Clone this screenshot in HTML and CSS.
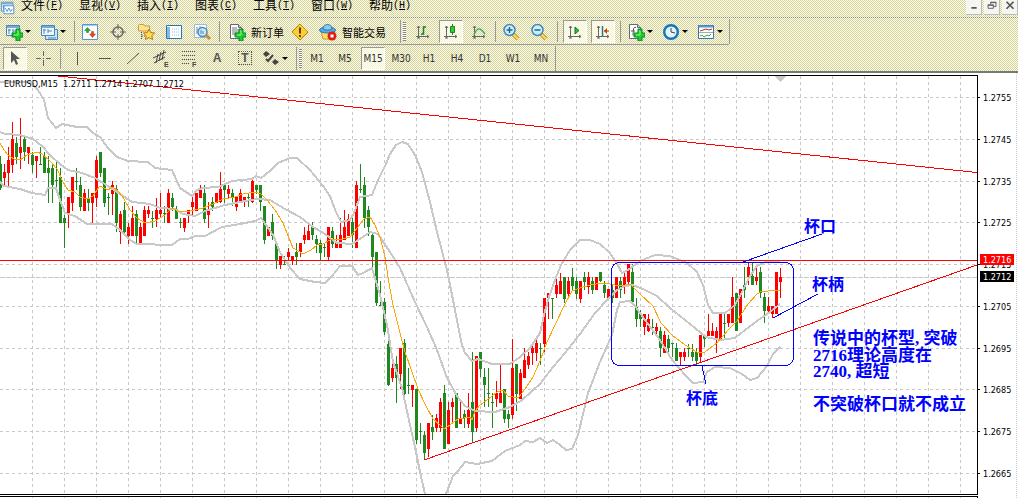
FILE: index.html
```
<!DOCTYPE html>
<html lang="zh-CN">
<head>
<meta charset="utf-8">
<title>EURUSD,M15</title>
<link rel="stylesheet" href="styles.css">
</head>
<body>
<svg class="defs" aria-hidden="true">
  <defs>
    <symbol id="axes" viewBox="0 0 18 18"><path d="M4.500 3v12M2 13.500h13M3 5l1.500-2L6 5M13 12l2 1.500-2 1.500M3 15h3" fill="none" stroke="#666"/></symbol>
    <symbol id="plus" viewBox="0 0 18 18"><path d="M11 6h4v4h3v4h-3v4h-4v-4H7v-4h4z" fill="#2c2" stroke="#083"/><path d="M12 8h1v4H9" fill="none" stroke="#8f8"/></symbol>
    <symbol id="sheet" viewBox="0 0 18 18"><path d="M2.500 1.500h8l3 3v11h-11z" fill="#fff" stroke="#667"/><path d="M10.500 1.500v3h3" fill="#ccd" stroke="#667"/></symbol>
    <symbol id="win" viewBox="0 0 18 18"><path d="M1.500 2.500h13v10h-13z" fill="#eef6ff" stroke="#48b"/><path d="M2 4h12" stroke="#7ad" stroke-width="2"/><path d="M4 6v5M3 7h3M8 10V6m0 2h4" stroke="#58a" fill="none"/></symbol>
  </defs>
</svg>
<header class="top">
  <nav class="menubar">
    <svg class="app" viewBox="0 0 18 18"><use href="#win"/><path d="M4.500 6.500h11v9h-11z" fill="#fff" stroke="#48c"/><path d="M6 9l2 4 2-4 2 4 2-3" fill="none" stroke="#48c"/></svg>
    <div class="menus">
      <button>文件<span>(<u>F</u>)</span></button>
      <button>显视<span>(<u>V</u>)</span></button>
      <button>插入<span>(<u>I</u>)</span></button>
      <button>图表<span>(<u>C</u>)</span></button>
      <button>工具<span>(<u>T</u>)</span></button>
      <button>窗口<span>(<u>W</u>)</span></button>
      <button>帮助<span>(<u>H</u>)</span></button>
    </div>
    <div class="winbtns">
      <button aria-label="最小化"><svg viewBox="0 0 16 16"><path d="M5 9h6" stroke="#555" stroke-width="2"/></svg></button>
      <button aria-label="还原"><svg viewBox="0 0 16 16"><path d="M6.500 5V2.500h6v5H10M6 3h7M3.500 5.500h6v4h-6zM3 6h7" fill="none" stroke="#555"/></svg></button>
      <button aria-label="关闭"><svg viewBox="0 0 16 16"><path d="M4 2l8 8M12 2l-8 8" stroke="#555" stroke-width="2"/></svg></button>
    </div>
  </nav>

  <div class="toolbar bordered">
    <button class="tool drop" aria-label="新图表"><svg viewBox="0 0 18 18"><use href="#win"/><use href="#plus"/></svg></button>
    <button class="tool drop" aria-label="配置文件"><svg viewBox="0 0 18 18"><path d="M5.500 6.500h12v10h-12z" fill="#cde6fa" stroke="#48b"/><use href="#win"/><path d="M8 15h8" stroke="#48b"/></svg></button>
    <i class="sep s4"></i>
    <button class="tool" aria-label="市场报价"><svg viewBox="0 0 18 18"><path d="M1.500 1.500h15v15h-15z" fill="#fff" stroke="#59c"/><path d="M2 2.500h14" stroke="#9cf"/><path d="M3.500 7.500l3-3 3 3h-2v2h-2v-2z" fill="#2a3" stroke="#173" stroke-width=".5"/><path d="M8.500 11l3 3.500 3-3.500h-2V8.500h-2V11z" fill="#e42" stroke="#931" stroke-width=".5"/></svg></button>
    <button class="tool" aria-label="数据窗口"><svg viewBox="0 0 18 18"><circle cx="9" cy="9" r="5" fill="none" stroke="#666" stroke-width="1.500"/><path d="M9 1v6M9 11v6M1 9h6M11 9h6" stroke="#666"/></svg></button>
    <button class="tool" aria-label="导航"><svg viewBox="0 0 18 18"><path d="M1.500 8V2.500l1-1h4l1 1.500h5V8z" fill="#ffe48a" stroke="#c94"/><path d="M4.500 9v7M5 13h4" stroke="#555" stroke-dasharray="1 1"/><path d="M12 6l1.600 3.500 4 .5-2.800 2.700.8 3.800-3.600-1.900-3.600 1.900.8-3.800L6.400 10l4-.5z" fill="#fd5" stroke="#b71"/></svg></button>
    <button class="tool" aria-label="终端"><svg viewBox="0 0 18 18"><path d="M1.500 2.500h15v13h-15z" fill="#fff" stroke="#27b"/><path d="M2 4h3v11H2z" fill="#8bd"/><path d="M7 6h8M7 9h8M7 12h8" stroke="#9be" stroke-dasharray="1 1"/></svg></button>
    <button class="tool" aria-label="策略测试"><svg viewBox="0 0 18 18"><path d="M1.500 1.500h12v13h-12z" fill="#f8fbff" stroke="#9bd"/><path d="M4 4v7M7 3v4" stroke="#68a"/><circle cx="9.500" cy="9" r="4.500" fill="#cceaff" stroke="#58a" stroke-width="1.500"/><path d="M8 7v4M10 8v3" stroke="#48a"/><path d="M13 12l4 4" stroke="#c83" stroke-width="3"/></svg></button>
    <i class="sep s7"></i>
    <button class="tool wide order"><svg viewBox="0 0 18 18"><use href="#sheet"/><path d="M4 5h5M4 7h7M4 9h7M4 11h4" stroke="#777"/><use href="#plus"/></svg>新订单</button>
    <button class="tool" aria-label="警告"><svg viewBox="0 0 18 18"><path d="M9 1l8 8-8 8-8-8z" fill="#fc3" stroke="#b80" stroke-linejoin="round"/><path d="M9 4.500v6M9 12v2" stroke="#542" stroke-width="2"/></svg></button>
    <button class="tool wide expert"><svg viewBox="0 0 18 18"><path d="M2 8l2 8h9l3-7z" fill="#fd6" stroke="#c92"/><ellipse cx="8.500" cy="7" rx="8" ry="3" fill="#5ae" stroke="#27a"/><path d="M4 6c0-6 9-6 9 0-2 1.500-7 1.500-9 0" fill="#8ce" stroke="#37a"/><circle cx="13" cy="13" r="4.500" fill="#d21"/><path d="M11.500 11.500h3v3h-3z" fill="#fff"/></svg>智能交易</button>
    <i class="handle"></i>
    <button class="tool" aria-label="柱状图"><svg viewBox="0 0 18 18"><use href="#axes"/><path d="M7 11h2.500V4H12" fill="none" stroke="#182" stroke-width="1.500"/></svg></button>
    <button class="tool on" aria-label="阴阳烛"><svg viewBox="0 0 18 18"><use href="#axes"/><path d="M10.500 1v11" stroke="#182"/><path d="M8.500 3.500h4v6h-4z" fill="#3c3" stroke="#182"/></svg></button>
    <button class="tool" aria-label="折线图"><svg viewBox="0 0 18 18"><use href="#axes"/><path d="M4 12c3-8 6-8 11-1" fill="none" stroke="#3a5" stroke-width="1.300"/></svg></button>
    <i class="sep s4"></i>
    <button class="tool" aria-label="放大"><svg viewBox="0 0 18 18"><path d="M11 11l5 5" stroke="#c93" stroke-width="4"/><path d="M11 11l5 5" stroke="#fd5" stroke-width="2"/><circle cx="7.500" cy="7" r="5.500" fill="#cef" stroke="#48b" stroke-width="1.500"/><path d="M4.500 7h6M7.500 4v6" stroke="#268" stroke-width="1.500"/></svg></button>
    <button class="tool" aria-label="缩小"><svg viewBox="0 0 18 18"><path d="M11 11l5 5" stroke="#c93" stroke-width="4"/><path d="M11 11l5 5" stroke="#fd5" stroke-width="2"/><circle cx="7.500" cy="7" r="5.500" fill="#cef" stroke="#48b" stroke-width="1.500"/><path d="M4.500 7h6" stroke="#268" stroke-width="1.500"/></svg></button>
    <i class="sep s8"></i>
    <button class="tool on" aria-label="自动滚动"><svg viewBox="0 0 18 18"><use href="#axes"/><path d="M9 4l4 3.500L9 11z" fill="#3b4" stroke="#172"/></svg></button>
    <button class="tool on" aria-label="图表平移"><svg viewBox="0 0 18 18"><use href="#axes"/><path d="M8.500 3v10" stroke="#27a" stroke-width="1.500"/><path d="M10 8h5" stroke="#a30"/><path d="M10 8l3-3v6z" fill="#c40"/></svg></button>
    <i class="sep s7"></i>
    <button class="tool drop" aria-label="技术指标"><svg viewBox="0 0 18 18"><use href="#sheet"/><path d="M9 4.500c-3-1-2.500 2-3 8M4 8h4" fill="none" stroke="#555"/><use href="#plus"/></svg></button>
    <button class="tool drop" aria-label="时间周期"><svg viewBox="0 0 18 18"><circle cx="9" cy="9" r="6.800" fill="#e6f4ff" stroke="#17b" stroke-width="2.400"/><path d="M9 5v4l4 1" fill="none" stroke="#345"/></svg></button>
    <button class="tool drop" aria-label="模板"><svg viewBox="0 0 18 18"><path d="M1.500 2.500h15v13h-15z" fill="#fff" stroke="#37a"/><path d="M2 3.500h14" stroke="#59d" stroke-width="2"/><path d="M2 9.500h14" stroke="#aaa"/><path d="M3 8l3-1 3-1 3 1 3-1" fill="none" stroke="#a32"/><path d="M3 13l2-1 2 2 3-2 2 1 2-2" fill="none" stroke="#3a4"/></svg></button>
    <i class="end"></i>
  </div>

  <div class="toolbar second">
    <button class="tool on" aria-label="光标"><svg viewBox="0 0 18 18"><path d="M5 2v12l3-3 2 5 2-1-2-5h4z" fill="#555"/></svg></button>
    <button class="tool" aria-label="十字准线"><svg viewBox="0 0 18 18"><path d="M9.500 2v5M9.500 11v6M2 9.500h5M12 9.500h5M9 9.500h1" stroke="#666"/></svg></button>
    <i class="sep s6"></i>
    <button class="tool" aria-label="垂直线"><svg viewBox="0 0 18 18"><path d="M9.500 3v13" stroke="#555"/></svg></button>
    <button class="tool" aria-label="水平线"><svg viewBox="0 0 18 18"><path d="M3 9.500h12" stroke="#555"/></svg></button>
    <button class="tool" aria-label="趋势线"><svg viewBox="0 0 18 18"><path d="M3 15L15 4" stroke="#555"/></svg></button>
    <button class="tool" aria-label="等距通道"><svg viewBox="0 0 18 18"><path d="M1 9L14 3M2 14l11-6M4 14L6 5M7 12l2-9M10 11l2-10" stroke="#444"/><text x="12" y="18">E</text></svg></button>
    <button class="tool" aria-label="斐波纳契"><svg viewBox="0 0 18 18"><path d="M2 2.500h14M2 6.500h14M2 10.500h14M2 14.500h8" stroke="#555" stroke-dasharray="1 1"/><text x="12" y="18">F</text></svg></button>
    <button class="tool letter" aria-label="文字">A</button>
    <button class="tool letter" aria-label="文字标签"><b class="boxed">T</b></button>
    <button class="tool drop arrows" aria-label="箭头"><svg viewBox="0 0 18 18"><path d="M4 2l4 3-4 3-3-3zM13 10l4 3-4 3-3-3z" fill="#444"/><path d="M4 10l2 2 5-6" fill="none" stroke="#444" stroke-width="2"/></svg></button>
    <i class="handle slim"></i>
    <button class="tool">M1</button>
    <button class="tool">M5</button>
    <button class="tool on">M15</button>
    <button class="tool">M30</button>
    <button class="tool">H1</button>
    <button class="tool">H4</button>
    <button class="tool">D1</button>
    <button class="tool">W1</button>
    <button class="tool">MN</button>
    <i class="end"></i>
  </div>
</header>
<main>
  <svg class="chart" id="chart" viewBox="0 73 1018 425" role="img" aria-label="EURUSD M15"></svg>
</main>
<script src="chart.js"></script>
</body>
</html>
```
FILE: styles.css
```
* { box-sizing: border-box; }
body {
  margin: 0;
  background: #fff;
  color: #000;
  font: 12px "Liberation Sans", "Noto Sans CJK SC", sans-serif;
  overflow: hidden;
}
button {
  border: 0;
  padding: 0;
  background: none;
  color: inherit;
  font: inherit;
  white-space: nowrap;
}
.defs { position: absolute; width: 0; height: 0; }

.top {
  background: #ebe8c8 url("data:image/svg+xml,%3Csvg xmlns='http://www.w3.org/2000/svg' width='4' height='4' shape-rendering='crispEdges'%3E%3Cpath fill='%23ffffd8' d='M0 0h4v4H0z'/%3E%3Cpath fill='%23d2cfae' d='M0 0h1v1H0zM2 0h1v1H2zM1 1h1v1H1zM3 1h1v1H3zM0 2h1v1H0zM2 2h1v1H2zM1 3h1v1H1zM3 3h1v1H3z'/%3E%3C/svg%3E");
  border-bottom: 2px solid #747c74;
}
.menubar {
  display: flex;
  height: 18px;
  border-bottom: 1px dotted #888;
}
.app { width: 16px; height: 16px; }
.menus {
  display: flex;
  flex: 1;
  gap: 16px;
  padding-left: 5px;
}
.menus button {
  display: flex;
  align-items: center;
  width: 42px;
  height: 12px;
  line-height: 12px;
}
.menus span { font: 10px/12px "Liberation Mono", monospace; }
.winbtns { display: flex; gap: 2px; }
.winbtns button {
  width: 16px;
  height: 15px;
  background: #f6f6f0;
  border-right: 1px solid #bbb;
  border-bottom: 1px solid #bbb;
}
.winbtns svg { display: block; width: 16px; height: 14px; }

.toolbar {
  display: flex;
  align-items: center;
  height: 27px;
  padding-left: 3px;
}
.toolbar.bordered {
  padding-left: 2px;
  background: linear-gradient(#999, #999) 0 100% / 729px 1px no-repeat;
}
.toolbar.second { height: 26px; padding-left: 1px; color: #333; font: 10px "DejaVu Sans Condensed", "DejaVu Sans", sans-serif; }
.tool {
  display: flex;
  flex: none;
  align-items: center;
  justify-content: center;
  width: 28px;
  height: 23px;
}
.tool svg { flex: none; width: 18px; height: 18px; }
.tool svg text { font: bold 7px "Liberation Sans", sans-serif; fill: #444; }
.tool.on {
  width: 24px;
  margin: 0 2px;
  background: rgba(255, 255, 240, .75);
  border: 1px solid #999;
  border-right-color: #fff;
  border-bottom-color: #fff;
}
.tool.drop { width: 35px; justify-content: flex-start; padding-left: 3px; gap: 2px; }
.tool.drop::after {
  content: "";
  border: 3px solid transparent;
  border-top-color: #000;
  border-bottom: 0;
}
.tool.wide { justify-content: flex-start; padding-left: 5px; gap: 5px; font-size: 11px; }
.tool.order { width: 63px; }
.tool.expert { width: 86px; }
.tool.arrows { width: 37px; }
.tool.letter { font: bold 12px "Liberation Sans", sans-serif; color: #555; }
.boxed { width: 14px; height: 14px; line-height: 13px; border: 1px dotted #555; }
.sep { flex: none; height: 21px; background: linear-gradient(#999, #999) 50% 0 / 1px 100% no-repeat; }
.s4 { width: 4px; }
.s6 { width: 6px; }
.s7 { width: 7px; }
.s8 { width: 8px; }
.handle {
  flex: none;
  width: 9px;
  height: 23px;
  background:
    linear-gradient(#999, #999) 0 0 / 1px 100% no-repeat,
    repeating-linear-gradient(#888 0 1px, #fff 1px 2px) 3px 2px / 3px 19px no-repeat;
}
.handle.slim { width: 7px; }
.end { width: 1px; height: 25px; background: #999; }

.chart { display: block; width: 100%; height: auto; }
.chart path, .chart rect { shape-rendering: crispEdges; }
.chart .grid { stroke: #c8c8c8; stroke-dasharray: 3 3; fill: none; }
.chart .bid { stroke: #c8c8c8; stroke-dasharray: 5 1; }
.chart .band { stroke: #c8c8c8; stroke-width: 2; fill: none; }
.chart .average { stroke: #ffa500; fill: none; }
.chart .up { stroke: #f00; }
.chart .down { stroke: #1f881f; }
.chart .thick { stroke-width: 3; }
.chart .red { stroke: #f00; fill: none; }
.chart .blue { stroke: #00f; fill: none; }
.chart .frame { stroke: #000; fill: none; }
.chart .edge { stroke: #ccc; stroke-dasharray: 1 1; }
.chart .marker { fill: #c8c8c8; }
.chart .tag-red { fill: #f00; }
.chart text { font: 9px "DejaVu Sans Condensed", "DejaVu Sans", sans-serif; white-space: pre; }
.chart text.tag { fill: #fff; }
.chart text.note { font: bold 16px "Liberation Serif", "Noto Sans CJK SC", serif; fill: #00f; }
.chart text.long { font-size: 17px; }
```
FILE: chart.js
```
// One candle every 4px: direction, high, low, body top, body bottom
const candles = `
G156 190 164 188|R164 185 172 178|R147 187 160 173|R122 173 139 165|G137 164 143 157|R118 169 147 153|G136 161 139 152|R147 164 147 153
G152 173 155 165|R156 178 156 161|G147 165 164 165|G152 173 156 173|G156 203 168 173|G164 203 168 185|G160 187 180 181|G168 223 177 223
G215 248 218 223|R197 228 197 214|R177 211 177 203|G168 190 181 182|G177 211 185 207|R189 211 193 211|G189 211 198 203|R193 223 193 203
R156 207 160 198|G152 177 152 173|G168 207 168 203|G193 215 197 198|R181 215 185 194|G185 232 189 223|R211 244 214 232|G202 233 210 232
R223 244 227 236|R206 236 218 236|G210 244 214 236|R223 244 227 244|R206 236 210 236|R206 218 210 214|G211 228 218 219|R198 227 210 219
R193 218 210 214|G206 223 213 214|R189 223 193 223|G193 211 198 207|G206 219 210 219|G218 228 222 223|R218 232 218 228|R210 223 210 214
R197 215 202 207|R193 211 193 211|R185 198 190 198|G185 223 193 219|R202 228 211 215|G197 211 202 207|R193 203 193 203|R172 203 189 202
G185 203 185 190|R185 198 189 194|G189 206 193 198|R197 211 197 207|R189 203 193 202|R197 207 197 202|G193 207 197 198|R178 203 181 202
G185 194 185 190|G185 211 185 202|G206 244 206 240|R227 236 227 236|G214 240 222 236|G243 269 243 261|R256 269 256 265|G256 265 264 265
R248 261 252 257|R256 265 256 261|G243 265 252 257|R243 257 243 252|R227 244 235 240|R222 240 231 240|G222 240 227 235|G235 253 239 244
G240 260 243 253|G243 257 247 248|R227 260 227 257|G227 248 231 244|R235 248 243 248|R218 248 235 248|R210 240 227 240|R214 236 219 236
G214 248 222 235|R181 248 185 248|G164 193 189 190|G177 228 185 218|G206 236 210 227|G233 268 235 257|G252 306 252 303|G281 306 305 306
G298 335 302 332|G335 386 344 385|R364 382 368 378|G356 403 364 378|R348 389 348 374|G339 398 343 394|G368 394 385 386|R385 407 385 390
G389 444 389 440|G423 444 431 432|G431 460 435 453|R423 457 423 449|G415 440 427 432|R414 432 418 428|R398 432 402 428|G385 449 393 449
R402 444 410 444|R398 423 402 407|G393 428 393 428|R402 424 418 424|G410 428 414 418|R393 428 410 424|G352 443 402 432|R356 432 356 428
G352 377 352 369|G368 407 377 385|G368 407 393 394|G393 428 402 403|R381 407 393 399|R364 403 393 403|G389 423 389 419|G410 428 414 419
R339 419 368 415|G364 411 364 394|R369 399 373 399|R348 378 360 378|R352 369 356 365|R343 365 348 353|R339 361 343 353|G343 365 348 349
R298 352 298 344|R293 319 293 298|G298 319 298 299|R277 298 285 294|R273 294 281 294|G277 303 277 299|R277 299 281 294|G268 290 277 286
G277 299 281 294|R281 303 281 299|G272 290 277 282|R272 294 277 287|G277 294 281 290|R277 290 277 290|G272 282 272 281|G281 298 285 293
R289 298 289 298|G285 303 290 298|R277 298 277 298|G277 298 281 290|R273 294 277 285|R264 286 264 282|G264 303 272 302|G298 327 307 319
G310 327 314 319|R314 335 314 327|R314 332 319 331|G319 335 327 328|R323 336 327 331|G327 357 331 348|R331 353 335 353|G335 353 339 348
G343 357 343 344|G343 361 348 361|R352 365 352 357|R348 361 352 357|G344 357 348 349|G344 361 352 357|G348 365 352 361|R335 363 335 357
G335 347 335 339|R314 336 331 336|R323 336 331 336|R327 353 331 339|R314 339 314 339|G314 339 323 324|R314 327 314 323|R277 323 297 323
G293 331 293 331|R289 323 289 323|G267 298 285 290|R262 285 267 277|G263 285 276 285|R267 285 277 281|G267 298 272 293|G293 323 297 311
R297 314 306 311|R306 318 306 314|R272 314 272 314|R268 298 277 282`.trim().split(/[|\n]/);

const upper = "0 82 31 82 38 90 44 100 48 118 56 128 62 124 77 127 87 127 93 133 100 137 108 148 117 157 128 161 148 162 155 168 172 170 180 188 192 196 197 190 203 188 218 187 232 181 252 179 256 176 261 178 270 171 278 163 290 158 297 158 310 170 323 186 330 196 336 212 341 222 350 220 354 213 360 197 372 195 378 180 385 166 390 154 396 145 402 142 408 144 415 155 422 172 430 202 437 232 447 270 455 310 462 345 465 353 472 361 478 359 492 364 510 364 520 357 530 348 540 333 544 315 549 297 555 280 561 265 570 250 580 240 590 240 600 244 610 253 617 264 622 273 628 270 640 261 655 255 670 256 687 263 697 272 703 285 708 305 713 313 725 313 735 305 742 292 750 276 757 266 765 262 780 262";
const middle = "0 132 5 134 20 135 33 139 42 146 50 155 60 164 68 170 82 173 95 178 108 186 120 194 132 202 150 204 160 208 175 209 183 214 195 216 205 211 225 205 245 201 257 199 270 200 285 209 300 217 313 227 325 234 337 243 352 244 360 239 370 232 378 234 390 252 400 268 415 302 427 327 437 350 447 378 457 396 465 406 475 411 495 412 510 407 521 401 532 391 540 384 553 367 565 353 580 334 595 313 608 299 617 290 625 286 633 285 645 290 657 296 670 308 685 320 695 328 706 337 720 340 735 338 745 330 757 321 770 312 780 304";
const lower = "0 182 4 186 20 189 32 193 45 195 48 188 56 188 60 200 65 213 75 216 87 224 112 224 120 230 130 240 137 244 172 245 180 239 188 239 195 236 205 236 222 227 240 224 255 221 261 218 266 225 273 235 280 252 290 268 300 279 315 282 325 283 332 276 340 266 352 266 358 275 363 273 372 268 380 295 387 325 393 362 402 388 410 425 415 447 420 472 425 494";
const lowerRight = "446 494 453 476 458 471 465 462 477 464 492 461 505 451 520 445 525 441 533 442 540 438 547 443 553 440 560 445 566 450 572 449 578 435 584 410 588 393 600 362 612 335 617 310 620 302 630 301 635 306 645 320 660 340 672 360 685 375 693 383 703 382 707 372 715 367 730 368 742 374 750 380 757 378 767 366 773 354 780 347";
const average = "0 143 4 150 8 155 14 159 20 160 27 155 37 152 42 154 50 161 57 169 63 182 68 190 75 192 80 197 88 199 93 196 97 190 100 186 108 190 113 187 119 192 124 199 130 210 137 218 145 223 155 221 165 215 172 208 180 212 190 211 203 208 213 204 223 199 235 197 243 194 255 192 261 194 267 200 275 210 283 223 289 238 293 248 303 254 311 250 317 245 323 244 332 239 340 240 350 237 358 227 364 219 370 217 375 225 380 237 385 257 389 283 393 305 400 333 405 352 412 372 418 389 426 406 433 419 440 425 444 429 450 425 458 419 470 417 472 420 475 411 480 405 487 400 497 392 503 390 508 396 518 398 525 389 533 377 540 361 547 342 555 325 565 304 572 291 580 288 590 285 602 283 610 284 620 286 630 284 640 294 653 306 661 323 672 335 685 345 697 352 705 352 717 343 728 330 737 321 748 304 757 294 762 291 768 291 780 290";

const path = (cls, d) => `<path class="${cls}" d="${d}"/>`;
const text = (cls, x, y, s) => `<text class="${cls}" x="${x}" y="${y}">${s}</text>`;

const prices = [[97, "1.2755"], [139, "1.2745"], [181, "1.2735"], [222, "1.2725"], [264, "1.2715"], [306, "1.2705"], [348, "1.2695"], [389, "1.2685"], [431, "1.2675"], [473, "1.2665"]];

let out = "";
let grid = "";
for (let x = 32; x < 977; x += 32) grid += `M${x + .5} 76V498`;
for (const [y] of prices) grid += `M0 ${y + .5}H977`;
out += path("grid", grid) + path("bid", "M0 277.5H977");

const marks = { R: ["", ""], G: ["", ""] };
candles.forEach((c, i) => {
  const [high, low, top, bottom] = c.slice(1).split(" ");
  const x = i * 4 + .5;
  marks[c[0]][0] += `M${x} ${high}V${low}`;
  marks[c[0]][1] += `M${x} ${top}V${bottom}`;
});
out += path("up", marks.R[0]) + path("up thick", marks.R[1]);
out += path("down", marks.G[0]) + path("down thick", marks.G[1]);
for (const line of [upper, middle, lower, lowerRight]) out += path("band", "M" + line);
out += path("average", "M" + average);

out += path("marker", "M775 76h11l-5.500 6z");
out += path("red", "M0 260.5H977M58 76L977 172.5M424 460L977 265");
out += `<rect class="blue" x="611.5" y="262.5" width="182" height="103" rx="8"/>`;
out += path("blue", "M743 262L822 234M773 318L818 294M702 366L706 384");

let ticks = "";
for (const [y, label] of prices) {
  ticks += `M978 ${y + .5}h2`;
  out += text("", 983, y + 4, label);
}
out += path("frame", "M0 75.5H977.5V494.5H0M0 496.5H977.5V498" + ticks);
out += path("edge", "M1016.5 73V498");
out += `<rect class="tag-red" x="980" y="254" width="34" height="11"/><rect x="980" y="271" width="34" height="11"/>`;
out += text("tag", 983, 263, "1.2716") + text("tag", 983, 280, "1.2712");
out += text("", 4, 87, "EURUSD,M15  1.2711 1.2714 1.2707 1.2712");

out += text("note", 804, 232, "杯口") + text("note", 812, 290, "杯柄") + text("note", 686, 404, "杯底");
out += text("note long", 813, 344, "传说中的杯型, 突破") + text("note long", 813, 361, "2716理论高度在");
out += text("note long", 813, 377, "2740, 超短") + text("note long", 813, 410, "不突破杯口就不成立");

document.getElementById("chart").innerHTML = out;
```
